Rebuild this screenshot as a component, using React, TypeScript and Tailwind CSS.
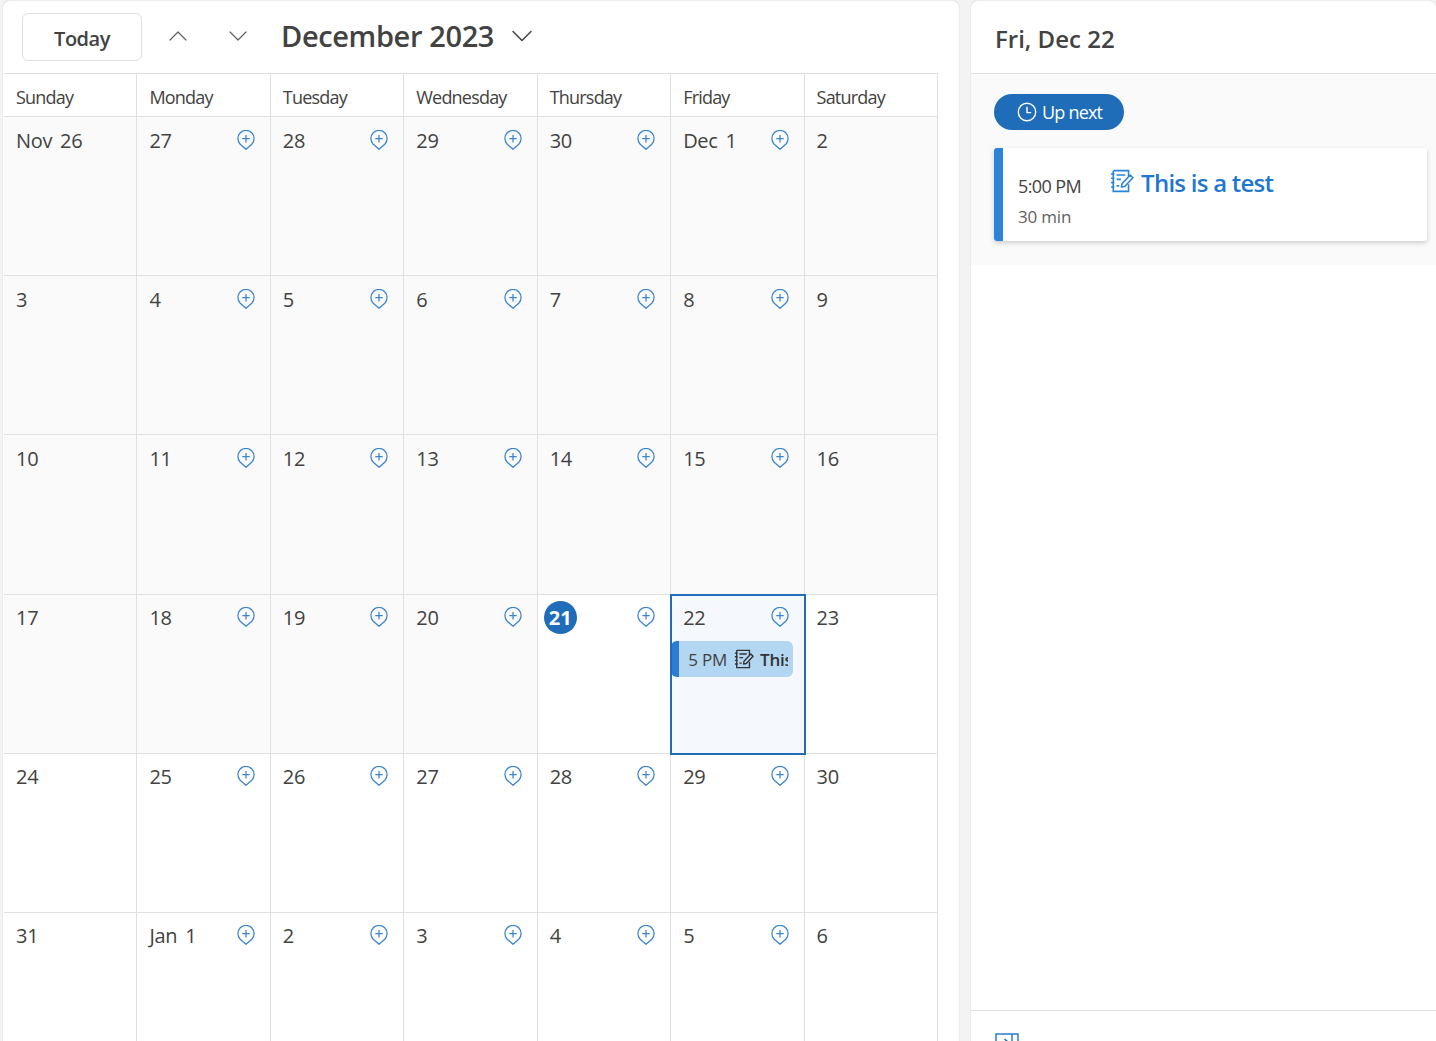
import React from 'react';
import { ChevronUp, ChevronDown } from 'lucide-react';

const dayNames = ['Sunday', 'Monday', 'Tuesday', 'Wednesday', 'Thursday', 'Friday', 'Saturday'];

const weeks = [
  ['Nov 26', '27', '28', '29', '30', 'Dec 1', '2'],
  ['3', '4', '5', '6', '7', '8', '9'],
  ['10', '11', '12', '13', '14', '15', '16'],
  ['17', '18', '19', '20', '21', '22', '23'],
  ['24', '25', '26', '27', '28', '29', '30'],
  ['31', 'Jan 1', '2', '3', '4', '5', '6'],
];

const rowHeights = ['h-[159px]', 'h-[159px]', 'h-[160px]', 'h-[159px]', 'h-[159px]', 'h-[129px]'];

const PinPlus = () => (
  <svg width="18" height="20" viewBox="0 0 18 20" fill="none" stroke="#3a84cf" strokeWidth="1.25">
    <path d="M9 19.3 L3.2 14.2 A8.1 8.1 0 1 1 14.8 14.2 Z" strokeLinejoin="round" />
    <path d="M9 5V12.4M5.3 8.7H12.7" />
  </svg>
);

const NoteIcon = ({ color, size }: { color: string; size: number }) => (
  <svg width={size} height={size} viewBox="0 0 22 22" fill="none" stroke={color} strokeWidth="1.5">
    <path d="M3 1.5H17V6.5M3 1.5V20.5H17V14" />
    <path d="M1 4.5H4M1 8.5H4M1 12.5H4M1 16.5H4" />
    <path d="M6 5.5H14M6 9.5H10M6 15.5H8.5" />
    <path d="M10.5 16.5L11 13.5L18.5 5.5L21 8L13.5 16Z" strokeLinejoin="round" />
  </svg>
);

const ClockIcon = () => (
  <svg width="20" height="20" viewBox="0 0 20 20" fill="none" stroke="white" strokeWidth="1.4">
    <circle cx="10" cy="10" r="8.7" />
    <path d="M10 4.8V10.6H14.2" />
  </svg>
);

const DayCell = ({ label, week, col }: { label: string; week: number; col: number }) => {
  const isPast = week < 3 || (week === 3 && col < 4);
  const isToday = week === 3 && col === 4;
  const isSelected = week === 3 && col === 5;
  const showAdd = col !== 0 && col !== 6;
  const bg = isSelected ? 'bg-[#f5f9fd]' : isPast ? 'bg-[#fafafa]' : 'bg-white';

  return (
    <div className={`relative min-w-0 border-b border-r border-[#e0e0e0] ${bg}`}>
      <div className={`flex h-[47px] items-start justify-between pl-3 pr-[15px] ${week >= 3 ? 'pt-[9px]' : 'pt-[10px]'}`}>
        {isToday ? (
          <span className="flex h-[33px] w-[33px] -translate-x-[6px] -translate-y-[3px] items-center justify-center rounded-full bg-[#1f6cb9] text-[20px] font-bold leading-none text-white">
            {label}
          </span>
        ) : (
          <span className="text-[20px] leading-[27px] tracking-[-0.3px] text-[#424242] [word-spacing:3px]">{label}</span>
        )}
        {showAdd && (
          <span className="pt-[3px]">
            <PinPlus />
          </span>
        )}
      </div>
      {isSelected && (
        <>
          <div className="relative -top-px flex h-[36px] w-[122px] items-center overflow-hidden rounded-[6px] bg-[#b3d6f2]">
            <div className="h-full w-[8px] shrink-0 bg-[#2b7cd3]" />
            <div className="ml-[9px] flex w-[100px] items-center gap-[7px] overflow-hidden whitespace-nowrap pt-[2px] text-[17px] tracking-[-0.2px] text-[#424242]">
              <span>5 PM</span>
              <span className="shrink-0 -translate-y-px">
                <NoteIcon color="#333333" size={20} />
              </span>
              <span className="-ml-[1px] font-semibold text-[#333333]">This is a test</span>
            </div>
          </div>
          <div className="pointer-events-none absolute -bottom-[2px] -left-px -right-[2px] -top-px z-10 border-2 border-[#1f6dbb]" />
        </>
      )}
    </div>
  );
};

export default function App() {
  return (
    <div className="flex h-[1041px] w-[1436px] gap-[12px] overflow-hidden bg-[#f3f3f3] pl-[3px] pt-[1px] font-['Open_Sans','Noto_Sans',sans-serif]">
      <main className="h-full w-[956px] shrink-0 rounded-t-[6px] bg-white pl-px shadow-[0_0_1px_rgba(0,0,0,0.3)]">
        <header className="flex h-[72px] items-start">
          <button className="ml-[18px] mt-[12px] h-[48px] w-[120px] rounded-[6px] border border-[#e0e0e0] bg-white pt-[3px] text-[20px] font-semibold tracking-[-0.5px] text-[#424242]">
            Today
          </button>
          <ChevronUp className="ml-[20px] mt-[19px] h-[32px] w-[32px] text-[#616161]" strokeWidth={0.9} />
          <ChevronDown className="ml-[28px] mt-[19px] h-[32px] w-[32px] text-[#616161]" strokeWidth={0.9} />
          <h1 className="ml-[27px] mt-[15px] text-[29px] font-semibold leading-[40px] tracking-[-0.37px] text-[#424242]">
            December 2023
          </h1>
          <ChevronDown className="ml-[10px] mt-[17px] h-[36px] w-[36px] text-[#424242]" strokeWidth={1} />
        </header>

        <div className="w-[934px] border-t border-[#e0e0e0]">
          <div className="grid h-[43px] grid-cols-7">
            {dayNames.map((name) => (
              <div
                key={name}
                className="border-b border-r border-[#e0e0e0] pl-3 pt-[10px] text-[18px] leading-[27px] tracking-[-0.8px] text-[#424242]"
              >
                {name}
              </div>
            ))}
          </div>
          {weeks.map((week, w) => (
            <div key={w} className={`grid grid-cols-7 ${rowHeights[w]}`}>
              {week.map((label, c) => (
                <DayCell key={c} label={label} week={w} col={c} />
              ))}
            </div>
          ))}
        </div>
      </main>

      <aside className="flex h-full min-w-0 flex-1 flex-col rounded-t-[6px] bg-white shadow-[0_0_1px_rgba(0,0,0,0.3)]">
        <div className="flex h-[73px] shrink-0 items-center border-b border-[#e0e0e0] pl-[24px] pt-[4px]">
          <h2 className="text-[24px] font-semibold tracking-[0px] text-[#424242]">Fri, Dec 22</h2>
        </div>
        <section className="h-[191px] shrink-0 bg-[#fafafa] pl-[23px] pr-[9px] pt-[20px]">
          <div className="flex h-[36px] w-[130px] items-center gap-[5px] rounded-full bg-[#1f6cb9] pl-[23px] text-[18px] tracking-[-0.8px] text-white">
            <ClockIcon />
            <span>Up next</span>
          </div>
          <div className="mt-[18px] flex h-[93px] overflow-hidden rounded-[3px] bg-white shadow-[0_2px_5px_rgba(0,0,0,0.18)]">
            <div className="w-[9px] shrink-0 bg-[#2b84d8]" />
            <div className="ml-[15px] pt-[25px]">
              <div className="text-[18px] leading-[27px] tracking-[-0.6px] text-[#424242]">5:00 PM</div>
              <div className="mt-[5px] text-[17px] leading-[24px] tracking-[-0.2px] text-[#616161]">30 min</div>
            </div>
            <div className="ml-[29px] flex h-fit items-center gap-[7px] pt-[17px]">
              <span className="-translate-y-[2px]">
                <NoteIcon color="#2b84d8" size={24} />
              </span>
              <span className="text-[24px] font-semibold leading-[36px] tracking-[-0.75px] text-[#1f77d0]">This is a test</span>
            </div>
          </div>
        </section>
        <div className="flex-1" />
        <div className="h-[31px] shrink-0 border-t border-[#e0e0e0] pl-[24px] pt-[22px]">
          <svg width="24" height="16" viewBox="0 0 24 16" fill="none" stroke="#2b7cd3" strokeWidth="1.5">
            <path d="M1 16V1H23V16M17 1V16" />
            <path d="M5 9H12M9.5 6L13 9L9.5 12" stroke="#1f6cb9" />
          </svg>
        </div>
      </aside>
    </div>
  );
}
